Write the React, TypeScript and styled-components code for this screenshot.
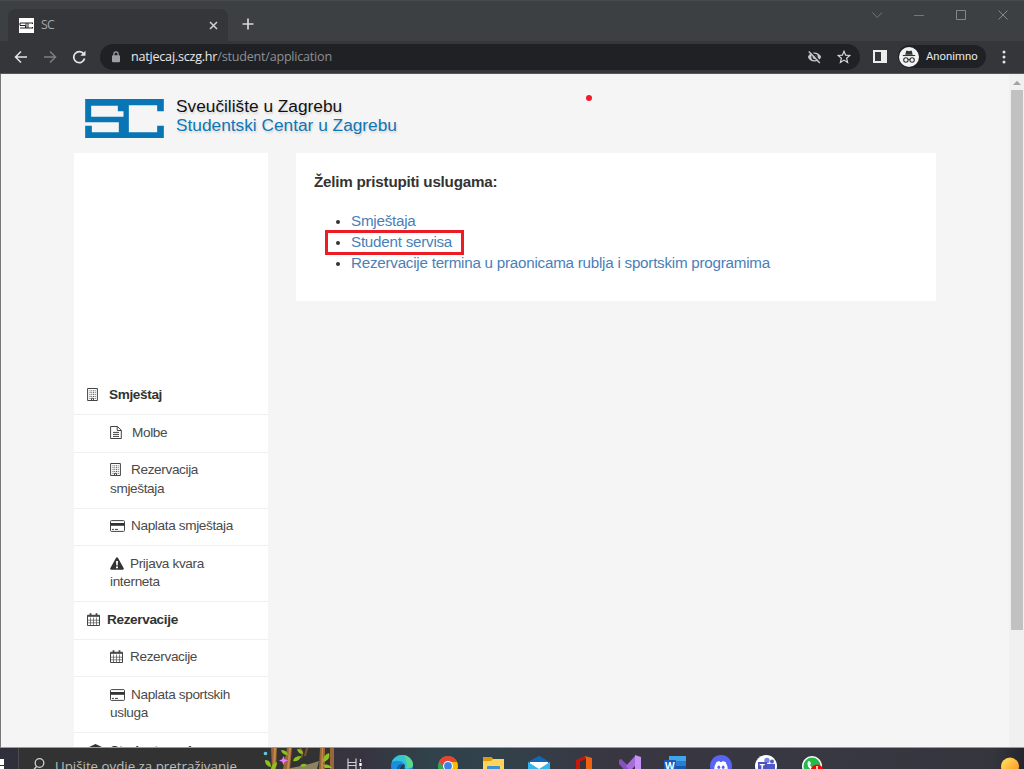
import React from 'react';
import styled, { createGlobalStyle } from 'styled-components';

const GlobalStyle = createGlobalStyle`
  * {
    box-sizing: border-box;
  }

  html,
  body {
    margin: 0;
    padding: 0;
    overflow: hidden;
  }

  svg {
    display: block;
    flex: none;
  }
`;

const uiFont = '"Open Sans", "Noto Sans", sans-serif';
const pageFont = '"Liberation Sans", Arial, sans-serif';

const Screen = styled.div`
  display: flex;
  flex-direction: column;
  width: 1024px;
  height: 769px;
  overflow: hidden;
  background: #35363a;
`;


/* Browser chrome */

const TabStrip = styled.div`
  display: flex;
  align-items: flex-start;
  flex: none;
  height: 41px;
  padding-left: 8px;
  background: #3c4043;
  border-top: 1px solid #464a4d;
`;

const Tab = styled.div`
  display: flex;
  align-items: center;
  width: 220px;
  height: 32px;
  margin-top: 8px;
  padding: 0 10px 0 11px;
  border-radius: 8px 8px 0 0;
  background: #35363a;
`;

const TabTitle = styled.span`
  flex: 1;
  margin-left: 7px;
  color: #a5a8ac;
  font: 12.2px/16px ${uiFont};
  letter-spacing: -0.8px;
`;

const NewTab = styled.div`
  padding: 17px 0 0 14px;
`;

const WindowControls = styled.div`
  display: flex;
  align-items: center;
  gap: 30px;
  margin-left: auto;
  padding: 8px 15px 0 0;
`;

const Toolbar = styled.div`
  display: flex;
  align-items: center;
  flex: none;
  height: 33px;
  padding: 0 13px 1px 14px;
  background: #35363a;
  border-bottom: 1px solid #56575a;
`;

const NavButtons = styled.div`
  display: flex;
  gap: 15px;
  width: 86px;
`;

const AddressBar = styled.div`
  display: flex;
  align-items: center;
  width: 760px;
  height: 26px;
  padding: 0 9px 0 11px;
  border-radius: 13px;
  background: #202124;
`;

const Address = styled.span`
  flex: 1;
  margin-left: 10px;
  padding-top: 1px;
  color: #8c9095;
  font: 12.6px/18px ${uiFont};
  letter-spacing: -0.23px;
  white-space: nowrap;

  b {
    color: #e8eaed;
    font-weight: 400;
  }
`;

const AddressIcons = styled.div`
  display: flex;
  gap: 15px;
`;

const PanelButton = styled.div`
  margin-left: 13px;
`;

const Profile = styled.div`
  display: flex;
  align-items: center;
  gap: 7px;
  width: 88px;
  height: 23px;
  margin: 0 16px 0 11px;
  padding-left: 1px;
  border-radius: 12px;
  background: #202124;
  color: #e8eaed;
  font: 11.3px/16px Roboto, sans-serif;
`;


/* Page */

const Viewport = styled.div`
  display: flex;
  flex: none;
  height: 674px;
  border-left: 1px solid #77787a;
  border-bottom: 1px solid #9b9b9b;
  background: #f5f5f5;
  font-family: ${pageFont};
`;

const Page = styled.div`
  position: relative;
  flex: 1;
  padding: 22px 73px 0;
  overflow: hidden;
`;

const Header = styled.header`
  display: flex;
  gap: 12px;
  height: 57px;
  padding-left: 11px;
`;

const Mark = styled.svg`
  margin-top: 3px;
`;

const Brand = styled.div`
  margin-top: 1px;
  color: #111;
  font-size: 17.3px;
  line-height: 19px;
  text-shadow: 1px 2px 2px rgba(0, 0, 0, 0.13);
  white-space: nowrap;

  div + div {
    color: #0f76b5;
  }
`;

const Columns = styled.div`
  display: flex;
  align-items: flex-start;
  gap: 28px;
`;

const Sidebar = styled.nav`
  width: 194px;
  height: 620px;
  padding-top: 225px;
  background: #fff;
`;

const MenuItem = styled.div<{ $group?: boolean }>`
  padding: 8.4px 20px 9.6px ${p => (p.$group ? 13 : 36)}px;
  border-bottom: 1px solid #f0f0f0;
  color: ${p => (p.$group ? '#333' : '#4a4a4a')};
  font-size: 13.6px;
  font-weight: ${p => (p.$group ? 700 : 400)};
  line-height: 18.5px;
  letter-spacing: -0.36px;

  svg {
    display: inline-block;
    vertical-align: -2px;
  }
`;

const Label = styled.span<{ $gap: number }>`
  margin-left: ${p => p.$gap}px;
`;

const Card = styled.main`
  width: 640px;
  height: 148px;
  padding: 18px;
  background: #fff;
  color: #333;
`;

const Heading = styled.h1`
  margin: 0;
  font-size: 15.2px;
  line-height: 21px;
  letter-spacing: -0.22px;
`;

const Services = styled.ul`
  margin: 18px 0 0;
  padding-left: 37px;
  font-size: 15.2px;
  line-height: 21px;
  letter-spacing: -0.24px;
`;

const Service = styled.li`
  position: relative;
  white-space: nowrap;

  &::marker {
    font-size: 14px;
  }
`;

const Link = styled.a`
  color: #4a80b8;
`;

const Highlight = styled.span`
  position: absolute;
  left: -26px;
  top: -1px;
  width: 139px;
  height: 25px;
  border: 3px solid #ed1c24;
`;

const Pointer = styled.span`
  position: absolute;
  left: 585px;
  top: 21px;
  width: 6px;
  height: 6px;
  border-radius: 50%;
  background: #ee1c2c;
`;

const Scrollbar = styled.div`
  display: flex;
  flex-direction: column;
  align-items: center;
  width: 15px;
  padding-top: 6px;
  background: #f0f0f0;
`;

const Thumb = styled.div`
  width: 12px;
  height: 540px;
  margin-top: 5px;
  background: #c1c1c1;
`;


/* Taskbar */

const Taskbar = styled.div`
  display: flex;
  flex: none;
  height: 21px;
  overflow: hidden;
  background: linear-gradient(90deg, #302f3c 0, #37333f 35%, #30424a 42%, #33404a 50%, #393641 60%, #373841 80%, #35353e 97%, #25262d);
`;

const Start = styled.div`
  width: 18px;
  padding-top: 11px;
`;

const Search = styled.div`
  display: flex;
  flex: none;
  width: 316px;
  border-left: 1px solid #4b4a50;
  background: #323232;
`;

const Placeholder = styled.span`
  flex: 1;
  padding: 8px 0 0 8px;
  color: #bcbcbc;
  font: 13.3px/20px ${uiFont};
  white-space: nowrap;
`;

const Apps = styled.div`
  display: flex;
  flex: 1;
`;

const TaskButton = styled.div`
  display: flex;
  justify-content: center;
  width: 45.5px;
  padding-top: 7px;
`;

const Weather = styled.div`
  margin-left: auto;
  padding: 9px 5px 0 0;
`;

type IconName = 'building' | 'file' | 'card' | 'warning' | 'calendar' | 'student';

const MenuIcon: React.FC<{ name: IconName }> = ({ name }) => {
  switch (name) {
    case 'building':
      return (
        <svg width="11" height="13" viewBox="0 0 11 13" fill="none" stroke="#444">
          <path d="M.6.5h9.8v12H.6z" />
          <path d="M2.5 2.8h6.2M2.5 4.7h6.2M2.5 6.6h6.2M2.5 8.5h6.2" strokeWidth=".9" strokeDasharray="1 .75" />
          <path d="M2.5 10.4h1M7.7 10.4h1M4.5 12.5v-2.2h2v2.2" />
        </svg>
      );
    case 'file':
      return (
        <svg width="12" height="13" viewBox="0 0 12 13" fill="none" stroke="#444">
          <path d="M.6.5h6.8l3.9 3.7v8.3H.6zM7.2.5v4h4" />
          <path d="M3 6.4h6M3 8.4h6M3 10.4h6" />
        </svg>
      );
    case 'card':
      return (
        <svg width="15" height="12" viewBox="0 0 15 12">
          <rect x=".5" y=".6" width="14" height="10.8" rx="1" fill="none" stroke="#444" />
          <path d="M.5 3h14v2.800H.5z" fill="#333" />
          <path d="M2 9.400h2M5 9.400h3" stroke="#444" />
        </svg>
      );
    case 'warning':
      return (
        <svg width="14" height="13" viewBox="0 0 14 13">
          <path d="M6.1.7a1 1 0 0 1 1.8 0l5.8 10.6c.4.7 0 1.4-.8 1.4H1.1c-.8 0-1.2-.7-.8-1.4z" fill="#333" />
          <path d="M6 4h2l-.3 4.4H6.3zM6 9.4h2v1.9H6z" fill="#fff" />
        </svg>
      );
    case 'calendar':
      return (
        <svg width="13" height="13" viewBox="0 0 13 13" fill="none" stroke="#444">
          <path d="M.5 2.3h12v10.2H.5z" />
          <path d="M.5 3h12" strokeWidth="1.6" />
          <path d="M3.5.2v3M9.5.2v3" strokeWidth="1.8" />
          <path d="M.5 7.2h12M.5 9.8h12M3.5 4.5v8M6.5 4.5v8M9.5 4.5v8" strokeWidth=".65" />
        </svg>
      );
    default:
      return (
        <svg width="17" height="13" viewBox="0 0 17 13">
          <path d="M8.5 0 17 4 8.5 8.5 0 4zM3.5 7v3c2.5 3 7.5 3 10 0V7l-5 2.5z" fill="#333" />
        </svg>
      );
  }
};

const menu: { icon: IconName; label: string; gap: number; group?: boolean }[] = [
  { icon: 'building', label: 'Smještaj', gap: 11, group: true },
  { icon: 'file', label: 'Molbe', gap: 10 },
  { icon: 'building', label: 'Rezervacija smještaja', gap: 10 },
  { icon: 'card', label: 'Naplata smještaja', gap: 6 },
  { icon: 'warning', label: 'Prijava kvara interneta', gap: 6 },
  { icon: 'calendar', label: 'Rezervacije', gap: 7, group: true },
  { icon: 'calendar', label: 'Rezervacije', gap: 7 },
  { icon: 'card', label: 'Naplata sportskih usluga', gap: 6 },
  { icon: 'student', label: 'Student servis', gap: 6, group: true }
];

const logoPath = 'M0 0H236V37H216V19H131V100H216V80H236V117H0V80H20V100H101V70H0ZM18 20V53H115V37H98V20Z';

const BrowserBar = () => (
  <>
    <TabStrip>
      <Tab>
        <svg width="15" height="15" viewBox="0 0 15 15">
          <path fill="#fff" d="M0 0h15v15H0z" />
          <path d="M1 5h13M1 10h13M1 7.5h5.5M7 5v5M9 5v5M1 5v2.5M6.5 7.5V10M13.5 5v1M13.5 9v1" stroke="#222" fill="none" />
        </svg>
        <TabTitle>SC</TabTitle>
        <svg width="9" height="9" viewBox="0 0 9 9" stroke="#d0d2d5" strokeWidth="1.5">
          <path d="m1 1 7 7M8 1 1 8" />
        </svg>
      </Tab>
      <NewTab>
        <svg width="12" height="12" viewBox="0 0 12 12" stroke="#d6d7d9" strokeWidth="1.7">
          <path d="M6 .5v11M.5 6h11" />
        </svg>
      </NewTab>
      <WindowControls>
        <svg width="12" height="12" viewBox="0 0 12 12" fill="none" stroke="#74777a"><path d="m1.5 3.5 4.7 5 4.7-5" /></svg>
        <svg width="12" height="12" viewBox="0 0 12 12" stroke="#74777a"><path d="M1 6.5h10" /></svg>
        <svg width="12" height="12" viewBox="0 0 12 12" fill="none" stroke="#85888a"><path d="M1.5 1.5h9v9h-9z" /></svg>
        <svg width="12" height="12" viewBox="0 0 12 12" stroke="#85888a"><path d="m1.5 1.5 9 9M10.5 1.5l-9 9" /></svg>
      </WindowControls>
    </TabStrip>
    <Toolbar>
      <NavButtons>
        <svg width="14" height="14" viewBox="0 0 14 14" fill="none" stroke="#e4e5e7" strokeWidth="1.5"><path d="M13 7H2M7 1.5 1.5 7 7 12.5" /></svg>
        <svg width="14" height="14" viewBox="0 0 14 14" fill="none" stroke="#7d8084" strokeWidth="1.5"><path d="M1 7h11M7 1.5 12.5 7 7 12.5" /></svg>
        <svg width="14" height="14" viewBox="0 0 14 14" fill="none" stroke="#e4e5e7" strokeWidth="1.7"><path d="M11.8 4A5.5 5.5 0 1 0 12.6 8.5" /><path d="M13.5.8v5H8.3z" fill="#e4e5e7" stroke="none" /></svg>
      </NavButtons>
      <AddressBar>
        <svg width="10" height="12" viewBox="0 0 10 12">
          <rect x="1" y="4.3" width="8" height="7" rx="1" fill="#9aa0a6" />
          <path d="M2.9 5V3a2.1 2.1 0 0 1 4.2 0v2" fill="none" stroke="#9aa0a6" strokeWidth="1.2" />
        </svg>
        <Address><b>natjecaj.sczg.hr</b>/student/application</Address>
        <AddressIcons>
          <svg width="15" height="14" viewBox="0 0 15 14">
            <path d="M.8 7C3.2 1 11.8 1 14.2 7 11.8 13 3.2 13 .8 7z" fill="#c4c6c9" />
            <circle cx="7.5" cy="7" r="3.2" fill="#202124" />
            <circle cx="7.5" cy="7" r="1.9" fill="#c4c6c9" />
            <path d="m3 .7 11 11.5" stroke="#202124" strokeWidth="1.6" />
            <path d="m1.8 1.5 11 11.5" stroke="#c4c6c9" strokeWidth="1.5" />
          </svg>
          <svg width="14" height="14" viewBox="0 0 14 14" fill="none" stroke="#d4d6d8" strokeWidth="1.2">
            <path d="m7 1.3 1.6 3.9 4.2.3-3.2 2.7 1 4.2L7 10.1l-3.6 2.3 1-4.2L1.2 5.5l4.2-.3z" />
          </svg>
        </AddressIcons>
      </AddressBar>
      <PanelButton>
        <svg width="14" height="13" viewBox="0 0 14 13">
          <path d="M0 0h14v13H0zM2 2v9h6V2z" fill="#eceded" fillRule="evenodd" />
        </svg>
      </PanelButton>
      <Profile>
        <svg width="20" height="20" viewBox="0 0 20 20">
          <circle cx="10" cy="10" r="10" fill="#f1f3f4" />
          <path d="M7.2 3.7h1.5l1.3.5 1.3-.5h1.5l.9 4H6.3z" fill="#333" />
          <path d="M3.8 8.5h12.4" stroke="#333" strokeWidth="1.1" />
          <g fill="none" stroke="#333" strokeWidth="1.1">
            <circle cx="6.9" cy="13" r="2.2" />
            <circle cx="13.1" cy="13" r="2.2" />
            <path d="M9 12.7q1-.7 2 0" />
          </g>
        </svg>
        Anonimno
      </Profile>
      <svg width="4" height="14" viewBox="0 0 4 14" fill="#e4e5e7">
        <circle cx="2" cy="2" r="1.5" />
        <circle cx="2" cy="7" r="1.5" />
        <circle cx="2" cy="12" r="1.5" />
      </svg>
    </Toolbar>
  </>
);

// Forest artwork at the right end of the search box
const SearchArt = () => (
  <svg width="72" height="21" viewBox="0 0 72 21">
    <circle cx="3.5" cy="5.5" r="1.8" fill="#62cbe0" />
    <path d="M20 21Q40 19 57 13l-2 8z" fill="#8d8360" />
    <path d="M9 0h6l-1 21h-4zM25 0h5l-2 21h-7zM58 0h5v21h-6zM68 0h4v21h-4z" fill="#9a6538" />
    <path d="M12 0h2l-1 21h-2zM27 0h2l-2 21h-2zM60 0h1v21h-2z" fill="#c18a4c" />
    <path d="M38 0q4 5 1 10M45 0l-2 8" stroke="#7d5230" strokeWidth="2" fill="none" />
    <g fill="#8cc21c">
      <path d="M3 12q6 0 6 7-6-1-6-7zM9 21q0-5 6-7 0 6-4 7zM19 2q6 0 7 5-6 0-7-5zM31 13q1-5 8-5-1 6-8 5zM35 1q6 0 6 5-5 0-6-5zM38 18q3-4 7-1-3 3-7 1zM61 14q0-7 6-9 2 7-6 9zM61 17q6-2 9 3h-7z" />
    </g>
    <path d="m21.5 8 1.3 3.3 3.2 1.2-3.2 1.2-1.3 3.3-1.3-3.3-3.2-1.2 3.2-1.2z" fill="#ed7bf3" />
  </svg>
);

const TaskIcons = () => (
  <Apps>
    <TaskButton>
      <svg width="22" height="22" viewBox="0 0 22 22" fill="none" stroke="#d0d0d4" strokeWidth="1.2">
        <path d="M2 3.5v4h8v-4M2 14v-3.5h8V14M2 7.5V11M10 7.5V11M14.5 4v3M14.5 12v4" />
        <path d="M14.5 8v3" strokeWidth="2.4" stroke="#fff" />
      </svg>
    </TaskButton>
    <TaskButton>
      <svg width="22" height="22" viewBox="0 0 22 22">
        <circle cx="11" cy="11" r="11" fill="#1b8fdc" />
        <path d="M.8 7C4-2 18-3 21.5 7c1.5 6-4 8-8 6 2-6-6-9-12.7-6z" fill="#36c3d6" />
        <path d="M14 .5c6 2 10 8 7 12l-6 1c3-5-1-7-1-13z" fill="#5bd98a" />
        <path d="M6 16Q5 8 13 9q-6 2-4 9z" fill="#1262ae" />
        <path d="M13 9q-5 2-4 7h8q-5-2-3-5z" fill="#263d4b" />
      </svg>
    </TaskButton>
    <TaskButton>
      <svg width="20" height="22" viewBox="0 0 20 22">
        <circle cx="10" cy="11" r="10" fill="#34a853" />
        <path d="M1.3 6A10 10 0 0 1 19 6.5l-9 .5-4 6z" fill="#ea4335" />
        <path d="M10 7h9q3 7-4 13l-3-7z" fill="#fbbc05" />
        <circle cx="10" cy="11" r="5" fill="#fff" />
        <circle cx="10" cy="11" r="3.9" fill="#3b82ed" />
      </svg>
    </TaskButton>
    <TaskButton>
      <svg width="21" height="22" viewBox="0 0 21 22">
        <path d="M0 2h8l2 2h11v18H0z" fill="#ffd45d" />
        <path d="M0 2h8l2 2-2 2H0z" fill="#d89b12" />
        <path d="M4 12q0-1 1-1h11q1 0 1 1v8H4z" fill="#3d91d4" />
      </svg>
    </TaskButton>
    <TaskButton>
      <svg width="22" height="22" viewBox="0 0 22 22">
        <path d="M0 7 11 .8 22 7v14H0z" fill="#1267b5" />
        <path d="M2 7h18v10H2z" fill="#fff" />
        <path d="m0 7 11 7 11-7v14H0z" fill="#35b5eb" />
      </svg>
    </TaskButton>
    <TaskButton>
      <svg width="18" height="22" viewBox="0 0 18 22">
        <path d="m1 5 9-4v21H1z" fill="#c7180c" />
        <path d="M5 6.5 11 4v18H5z" fill="#39333f" />
        <path d="m10 1 7 2v19h-6V4z" fill="#f06210" />
      </svg>
    </TaskButton>
    <TaskButton>
      <svg width="22" height="22" viewBox="0 0 22 22">
        <path d="M0 5 2 4l15 14-5 4L0 9z" fill="#8651bd" />
        <path d="m16 1-9 10 4 5 6-6z" fill="#a86ce0" />
        <path d="m16 0 6 2v20h-6z" fill="#c692f5" />
      </svg>
    </TaskButton>
    <TaskButton>
      <svg width="22" height="22" viewBox="0 0 22 22">
        <path d="M5 1h17v20H5z" fill="#2b7cd3" />
        <path d="M5 1h17v5H5z" fill="#41a5ee" />
        <path d="M5 11h17v10H5z" fill="#1857b0" />
        <rect y="5" width="12" height="12" rx="1" fill="#185abd" />
        <text x="1" y="15" fill="#fff" fontFamily="Open Sans, sans-serif" fontSize="10" fontWeight="700">W</text>
      </svg>
    </TaskButton>
    <TaskButton>
      <svg width="22" height="22" viewBox="0 0 22 22">
        <circle cx="11" cy="11" r="11" fill="#5865f2" />
        <path d="M4.5 17q-1-5 2-10l3-1 .5 1h2l.5-1 3 1q3 5 2 10l-3 1h-7z" fill="#fff" />
        <ellipse cx="8.8" cy="12.3" rx="1.4" ry="1.7" fill="#5865f2" />
        <ellipse cx="13.2" cy="12.3" rx="1.4" ry="1.7" fill="#5865f2" />
      </svg>
    </TaskButton>
    <TaskButton>
      <svg width="22" height="22" viewBox="0 0 22 22">
        <circle cx="11" cy="11" r="11" fill="#fff" />
        <circle cx="12" cy="5.5" r="2.7" fill="#7b83eb" />
        <circle cx="17" cy="6.5" r="2" fill="#5059c9" />
        <path d="M8 9h12v7H8z" fill="#5059c9" />
        <path d="M3 7h9v10H3z" fill="#4b53bc" />
        <text x="4.5" y="15" fill="#fff" fontFamily="Open Sans, sans-serif" fontSize="9" fontWeight="700">T</text>
      </svg>
    </TaskButton>
    <TaskButton>
      <svg width="22" height="22" viewBox="0 0 22 22">
        <circle cx="11" cy="11" r="10" fill="#fff" />
        <circle cx="11" cy="11" r="8.5" fill="#25ba4a" />
        <path d="M7 6.5q1-1 2 0l1 2.2-1 1.3q1 2 3 3l-1 2q-6-3-4-8.500z" fill="#fff" />
        <circle cx="16" cy="16" r="6.5" fill="#f00808" />
        <path d="M16 11v4" stroke="#fff" strokeWidth="1.5" />
      </svg>
    </TaskButton>
    <Weather>
      <svg width="18" height="20" viewBox="0 0 18 20">
        <defs>
          <linearGradient id="sun" x1="0" y1="0" x2="1" y2="1">
            <stop stopColor="#ffe66b" />
            <stop offset="1" stopColor="#ff8a12" />
          </linearGradient>
        </defs>
        <circle cx="9" cy="9.5" r="9" fill="url(#sun)" />
      </svg>
    </Weather>
  </Apps>
);

const App: React.FC = () => (
  <Screen>
    <GlobalStyle />
    <BrowserBar />
    <Viewport>
      <Page>
        <Header>
          <Mark width="79" height="39" viewBox="0 0 236 117">
            <path d={logoPath} fill="#0876b4" fillRule="evenodd" />
          </Mark>
          <Brand>
            <div>Sveučilište u Zagrebu</div>
            <div>Studentski Centar u Zagrebu</div>
          </Brand>
        </Header>
        <Columns>
          <Sidebar>
            {menu.map((item, i) => (
              <MenuItem key={i} $group={item.group}>
                <MenuIcon name={item.icon} />
                <Label $gap={item.gap}>{item.label}</Label>
              </MenuItem>
            ))}
          </Sidebar>
          <Card>
            <Heading>Želim pristupiti uslugama:</Heading>
            <Services>
              <Service><Link>Smještaja</Link></Service>
              <Service>
                <Link>Student servisa</Link>
                <Highlight />
              </Service>
              <Service><Link>Rezervacije termina u praonicama rublja i sportskim programima</Link></Service>
            </Services>
          </Card>
        </Columns>
        <Pointer />
      </Page>
      <Scrollbar>
        <svg width="8" height="5" viewBox="0 0 8 5"><path d="M0 5 4 .8 8 5z" fill="#a3a3a3" /></svg>
        <Thumb />
      </Scrollbar>
    </Viewport>
    <Taskbar>
      <Start>
        <svg width="4" height="10" viewBox="0 0 4 10"><path d="M0 0h4v6H0zM0 7h4v3H0z" fill="#fff" /></svg>
      </Start>
      <Search>
        <svg width="28" height="21" viewBox="0 0 28 21" fill="none" stroke="#d0d0d0" strokeWidth="1.3">
          <circle cx="20.5" cy="15" r="4.3" />
          <path d="m17.5 18.5-3.5 4" />
        </svg>
        <Placeholder>Upišite ovdje za pretraživanje</Placeholder>
        <SearchArt />
      </Search>
      <TaskIcons />
    </Taskbar>
  </Screen>
);

export default App;
